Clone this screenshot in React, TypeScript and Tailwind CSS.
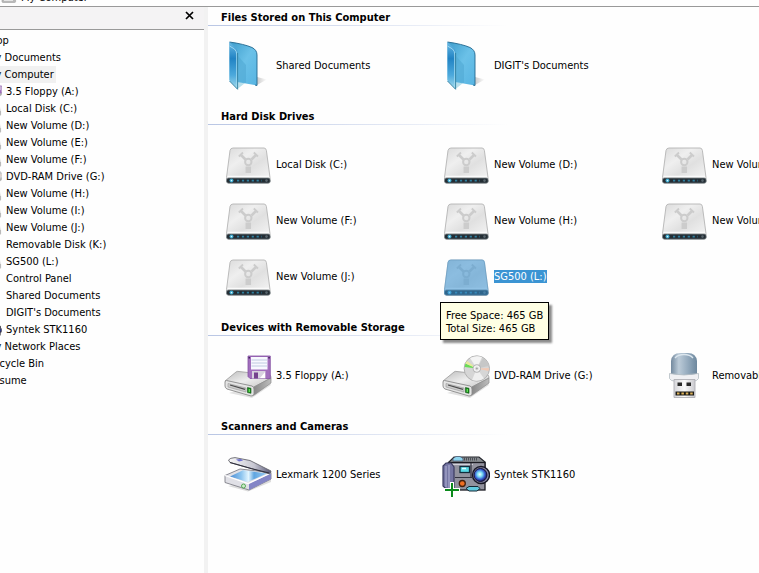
import type { ReactNode } from "react";

type IconProps = { size: string; selected?: boolean };

function HardDisk({ size, selected }: IconProps) {
  return (
    <svg viewBox="0 0 48 48" className={`${size} shrink-0`} aria-hidden="true">
      <defs>
        <linearGradient id="hdTop" x1="0" y1="0" x2="1" y2="1">
          <stop offset="0" stopColor="#dadada" />
          <stop offset="0.35" stopColor="#efefef" />
          <stop offset="0.6" stopColor="#e0e0e0" />
          <stop offset="1" stopColor="#f4f4f4" />
        </linearGradient>
      </defs>
      <path d="M9 8H40Q42 8 42.400 10.500L46 37.500V39H2.500V37.500L6 10.500Q6.500 8 9 8Z" fill="url(#hdTop)" stroke="#b4b4b4" strokeWidth="0.900" />
      <path d="M3.500 36.500H45" stroke="#fbfbfb" strokeWidth="1.500" />
      <g fill="none" stroke="#cccccc">
        <circle cx="24.300" cy="22" r="3.200" strokeWidth="2" />
        <path d="M21.500 19.500L17 15M27.500 19.500L32 15" strokeWidth="2.600" />
        <path d="M14.800 16.500L19 12.500M34 16.500L29.800 12.500" strokeWidth="1.800" />
        <path d="M24.300 26.500V33" strokeWidth="5.500" />
      </g>
      <rect x="2.500" y="38" width="43.700" height="5.200" rx="2" fill="#232d34" stroke="#7f8689" strokeWidth="0.800" />
      <circle cx="7.500" cy="40.600" r="2" fill="#39a5c9" />
      <circle cx="7.500" cy="40.600" r="0.800" fill="#d8f8ff" />
      <path d="M13 40.600H38" stroke="#2f7f9e" strokeWidth="1.600" strokeDasharray="2.200 2.700" />
      <circle cx="42.500" cy="40.600" r="1.300" fill="#58656c" />
      {selected && (
        <path
          d="M9 7.500H40Q42.500 7.500 43 10.500L46.500 38V41Q46.500 43.500 44 43.500H5Q2 43.500 2 41V38L5.500 10.500Q6 7.500 9 7.500Z"
          fill="#3b94d3"
          opacity="0.550"
        />
      )}
    </svg>
  );
}

function SmallDisk({ size }: IconProps) {
  return (
    <svg viewBox="0 0 16 16" className={`${size} shrink-0`} aria-hidden="true">
      <path d="M3 2H12.500L14.600 10.500H1Z" fill="#ececec" stroke="#cfcfcf" strokeWidth="0.600" />
      <path d="M1 10.500H14.600V13.500Q14.600 14.500 13.500 14.500H2Q1 14.500 1 13.500Z" fill="#b9b9b9" stroke="#a0a0a0" strokeWidth="0.600" />
      <path d="M3 12.500H12" stroke="#e6e6e6" strokeWidth="1" />
    </svg>
  );
}

function Folder({ size }: IconProps) {
  return (
    <svg viewBox="0 0 48 48" className={`${size} shrink-0 overflow-visible`} aria-hidden="true">
      <defs>
        <linearGradient id="foBack" x1="0" y1="0" x2="1" y2="1">
          <stop offset="0" stopColor="#3d9ccb" />
          <stop offset="0.500" stopColor="#6bc1e8" />
          <stop offset="1" stopColor="#57b4e2" />
        </linearGradient>
        <linearGradient id="foFlap" x1="0" y1="0" x2="0" y2="1">
          <stop offset="0" stopColor="#69b9e4" />
          <stop offset="0.350" stopColor="#2183c4" />
          <stop offset="0.700" stopColor="#4ca9dc" />
          <stop offset="1" stopColor="#a5dbec" />
        </linearGradient>
        <linearGradient id="foShade" x1="0" y1="0" x2="1" y2="0">
          <stop offset="0" stopColor="#c6c6c6" />
          <stop offset="1" stopColor="#ffffff" />
        </linearGradient>
      </defs>
      <path d="M32 44.500L33 36L43 38.500Z" fill="url(#foShade)" />
      <path d="M13.500 48L21 42L8 40Z" fill="#b8dfeb" />
      <path d="M5.500 1Q20 3 28 6.500Q33 9 33 14V44.500L13 41L5.500 39Z" fill="url(#foBack)" />
      <path d="M14 15L22 24V42L14 41Z" fill="#50a9d3" opacity="0.600" />
      <path d="M5.500 1Q20 3 28 6.500Q33 9 33 14V44.500L31 44" fill="none" stroke="#23688e" strokeWidth="0.900" />
      <path d="M5.500 1L11.500 6.500Q13.500 8.500 13.500 12V48.300L5.500 40Z" fill="url(#foFlap)" />
      <path d="M5.500 5L10.500 8Q12.700 10 12.700 13V46" fill="none" stroke="#a3dcf2" strokeWidth="0.900" />
      <path d="M13.600 12V48.300L5.500 40" fill="none" stroke="#337f9f" strokeWidth="0.900" />
    </svg>
  );
}

function DriveBase() {
  return (
    <>
      <defs>
        <linearGradient id="drTop" x1="0" y1="0" x2="1" y2="1">
          <stop offset="0" stopColor="#bcbcbc" />
          <stop offset="0.500" stopColor="#ededed" />
          <stop offset="1" stopColor="#c4c4c4" />
        </linearGradient>
        <linearGradient id="drSide" x1="0" y1="0" x2="1" y2="0">
          <stop offset="0" stopColor="#858585" />
          <stop offset="1" stopColor="#bdbdbd" />
        </linearGradient>
      </defs>
      <path d="M5 42L28 47L47 34L44 30Z" fill="#e2e2e2" />
      <path d="M1 30L12 21Q13 20 15 20.500L46 24Q47 25 47 27L29 36.500Z" fill="url(#drTop)" stroke="#9b9b9b" strokeWidth="0.800" />
      <path d="M29 36.500L47 27V32L29.500 44.500Z" fill="url(#drSide)" stroke="#8c8c8c" strokeWidth="0.700" />
      <path d="M2.500 29.500L28 35Q30 36 30 38V43Q29.500 45.300 27 45L3 38Q1 37 1 35V31Q1 29.500 2.500 29.500Z" fill="#e4e4e4" stroke="#8a8a8a" strokeWidth="0.900" />
      <path d="M4 32.500L22 37V41L4 36Z" fill="#cdcdcd" stroke="#a0a0a0" strokeWidth="0.700" />
      <path d="M6 34L21 38.300" stroke="#4c4c4c" strokeWidth="1.300" />
      <path d="M23.500 36.500L27 37.300V42.300L23.500 41.500Z" fill="#178a1d" stroke="#0d500f" strokeWidth="0.600" />
      <path d="M25.300 38V41" stroke="#6ae55b" strokeWidth="1.200" />
    </>
  );
}

function Floppy({ size }: IconProps) {
  return (
    <svg viewBox="0 0 48 48" className={`${size} shrink-0`} aria-hidden="true">
      <DriveBase />
      <path d="M24 5H46.300V27.500H26L24 25.500Z" fill="#a26fbd" stroke="#8450a2" strokeWidth="0.800" />
      <rect x="27" y="6" width="16.500" height="12.500" fill="#f8f8ff" />
      <path d="M27.500 9H43M27.500 12H43M27.500 15H43" stroke="#b9c5dd" strokeWidth="0.900" />
      <rect x="24.500" y="6" width="1.500" height="1.500" fill="#41205a" />
      <rect x="44.300" y="6" width="1.500" height="1.500" fill="#41205a" />
      <rect x="28" y="20" width="13.500" height="7.500" fill="#d8d2df" />
      <rect x="30" y="21.500" width="4" height="6" fill="#75418e" />
      <path d="M36 27L41 21V27Z" fill="#ffffff" />
    </svg>
  );
}

function DvdDrive({ size }: IconProps) {
  return (
    <svg viewBox="0 0 48 48" className={`${size} shrink-0`} aria-hidden="true">
      <DriveBase />
      <circle cx="34.800" cy="17.500" r="12.700" fill="#d6d6d6" stroke="#adadad" strokeWidth="0.900" />
      <path d="M34.800 17.500L28 7Q34 4 40 6Z" fill="#f4f4f4" />
      <path d="M34.800 17.500L30 29Q36 31 42 27.500Z" fill="#efefef" />
      <path d="M34.800 17.500L41 7Q46 10 47 15Z" fill="#c6c7c7" />
      <path d="M34.800 17.500L22.700 16L23.500 12.500Z" fill="#68dd55" />
      <path d="M34.800 17.500L23.500 12.500L25 10Z" fill="#e9eb9a" />
      <path d="M34.800 17.500L46.500 20L47 17Z" fill="#f0c9b5" />
      <circle cx="34.800" cy="17.500" r="4.200" fill="#b5b5b5" />
      <circle cx="34.800" cy="17.500" r="2.800" fill="#e4e4e4" stroke="#ffffff" strokeWidth="0.900" />
      <circle cx="34.800" cy="17.500" r="1.100" fill="#a5a5a5" />
    </svg>
  );
}

function UsbStick({ size }: IconProps) {
  return (
    <svg viewBox="0 0 48 48" className={`${size} shrink-0`} aria-hidden="true">
      <defs>
        <linearGradient id="usBody" x1="0" y1="0" x2="1" y2="0">
          <stop offset="0" stopColor="#73899e" />
          <stop offset="0.300" stopColor="#bccbd8" />
          <stop offset="0.650" stopColor="#94aabd" />
          <stop offset="1" stopColor="#6d879d" />
        </linearGradient>
        <linearGradient id="usPlug" x1="0" y1="0" x2="1" y2="0">
          <stop offset="0" stopColor="#d6d6da" />
          <stop offset="0.500" stopColor="#fafafa" />
          <stop offset="1" stopColor="#c9c9ce" />
        </linearGradient>
      </defs>
      <path d="M11 25V10Q12 2 20 2H28Q36 2 37 10V25Z" fill="url(#usBody)" />
      <path d="M15 7Q18 3.500 24 3.500T33 7" fill="none" stroke="#dbe6ee" strokeWidth="1.300" />
      <path d="M9.500 22.500Q24 25.500 38.500 22.500V27.500Q37 30 34 30H14Q11 30 9.500 27.500Z" fill="#f0f0f3" stroke="#b4bcc3" strokeWidth="0.800" />
      <path d="M14 28.500H35V46.500H14Z" fill="url(#usPlug)" stroke="#b0b0b6" strokeWidth="0.900" />
      <rect x="17.500" y="31.500" width="4.500" height="3.500" fill="#292929" />
      <rect x="26.500" y="31.500" width="4.500" height="3.500" fill="#292929" />
      <rect x="15.500" y="40.500" width="18.500" height="4" fill="#1b1a16" />
      <path d="M17 42.500H33" stroke="#dcb25a" strokeWidth="2" strokeDasharray="2.500 1.900" />
    </svg>
  );
}

function Scanner({ size }: IconProps) {
  return (
    <svg viewBox="0 0 48 48" className={`${size} shrink-0`} aria-hidden="true">
      <defs>
        <linearGradient id="scGlass" x1="0" y1="0" x2="1" y2="0">
          <stop offset="0" stopColor="#4d8ed4" />
          <stop offset="0.300" stopColor="#8cc4ef" />
          <stop offset="0.500" stopColor="#e2f5ff" />
          <stop offset="0.650" stopColor="#5fa5e0" />
          <stop offset="1" stopColor="#9bcdf3" />
        </linearGradient>
        <linearGradient id="scLid" x1="0" y1="0" x2="1" y2="0">
          <stop offset="0" stopColor="#f8f8f8" />
          <stop offset="0.600" stopColor="#c7c7d2" />
          <stop offset="1" stopColor="#555575" />
        </linearGradient>
      </defs>
      <path d="M4 36L24 41.500L47 32V28Z" fill="#dddddd" />
      <path d="M1 25.500L16 19L47 22.500V29L25 40L1 32.500Z" fill="#e0e0e6" stroke="#7f7f88" strokeWidth="0.900" />
      <path d="M25 34L47 23V29L25 40Z" fill="#8385c6" />
      <path d="M6 26.500L19 20.200L43 23.500L23.500 32Z" fill="url(#scGlass)" />
      <path d="M1 25.500L24 33.500L47 23" fill="none" stroke="#ffffff" strokeWidth="1.300" />
      <path d="M4.500 10Q6 7.800 11 7.600L26 10.500L47 21L46 24L27 18.500L6 12.500Z" fill="url(#scLid)" stroke="#66666e" strokeWidth="0.900" />
      <path d="M6 12.500L27 18.500L45 23" fill="none" stroke="#2f2f3d" strokeWidth="1.100" />
      <path d="M12 9.500L17 9L19 10.500L15 11.500Z" fill="#6d70cf" />
      <circle cx="19.500" cy="36" r="2" fill="#cdeccb" stroke="#4aa54a" strokeWidth="0.900" />
    </svg>
  );
}

function Camera({ size }: IconProps) {
  return (
    <svg viewBox="0 0 48 48" className={`${size} shrink-0`} aria-hidden="true">
      <defs>
        <radialGradient id="caLens" cx="0.450" cy="0.450" r="0.550">
          <stop offset="0" stopColor="#f4ffff" />
          <stop offset="0.350" stopColor="#79dcf5" />
          <stop offset="0.700" stopColor="#3559cf" />
          <stop offset="1" stopColor="#1b1450" />
        </radialGradient>
      </defs>
      <path d="M6 13L12 7H37L43 12V18H6Z" fill="#888c91" stroke="#25272d" strokeWidth="1.200" />
      <path d="M12 9H35" stroke="#4b4f55" strokeWidth="3" strokeDasharray="1 1" />
      <path d="M11 8.500L14 6.500H18L21 8.500V11H11Z" fill="#8ed4ee" stroke="#515f76" strokeWidth="0.800" />
      <rect x="7" y="12.500" width="36" height="27.500" fill="#92929e" stroke="#1b1b22" strokeWidth="1.300" />
      <path d="M9 14.500H31" stroke="#d2d2da" strokeWidth="1.200" />
      <path d="M13 27.500H30M29 13V28" stroke="#33333f" strokeWidth="1.200" />
      <path d="M1 16L4 13H9L12 17V39H4L1 36Z" fill="#7475a2" stroke="#3b3b61" strokeWidth="1.200" />
      <path d="M4 16V37M7 15V38" stroke="#a5a6cb" strokeWidth="1.300" />
      <rect x="18" y="16.500" width="9.500" height="6" fill="#5adce8" stroke="#122d3c" strokeWidth="1.300" />
      <path d="M20 18.500H24" stroke="#dfffff" strokeWidth="1.500" />
      <circle cx="20.300" cy="33.500" r="3" fill="#ef6f23" stroke="#43200e" strokeWidth="1.300" />
      <circle cx="39" cy="25" r="8.500" fill="#8a8aa8" stroke="#181824" strokeWidth="1.400" />
      <circle cx="38.500" cy="25" r="6.500" fill="url(#caLens)" stroke="#16163b" strokeWidth="1" />
      <path d="M24 38.500L27 36.500H36L38 38.500L35 41H27Z" fill="#61c9df" stroke="#142934" strokeWidth="1" />
      <path d="M10 32V48M2 40H18" stroke="#ffffff" strokeWidth="4" />
      <path d="M10 33V47M3 40H17" stroke="#0b8a1b" strokeWidth="2" />
    </svg>
  );
}

function Blank({ size }: IconProps) {
  return <span className={`${size} shrink-0`} />;
}

type IconType = (props: IconProps) => ReactNode;
type TreeNode = { label: string; indent: string; icon: IconType; current?: boolean };

const ROOT = "pl-0";
const CHILD = "pl-[19px]";
const LEAF = "pl-[38px]";

const tree: TreeNode[] = [
  { label: "Desktop", indent: ROOT, icon: Blank },
  { label: "My Documents", indent: CHILD, icon: Blank },
  { label: "My Computer", indent: CHILD, icon: Blank, current: true },
  { label: "3.5 Floppy (A:)", indent: LEAF, icon: Floppy },
  { label: "Local Disk (C:)", indent: LEAF, icon: SmallDisk },
  { label: "New Volume (D:)", indent: LEAF, icon: SmallDisk },
  { label: "New Volume (E:)", indent: LEAF, icon: SmallDisk },
  { label: "New Volume (F:)", indent: LEAF, icon: SmallDisk },
  { label: "DVD-RAM Drive (G:)", indent: LEAF, icon: DvdDrive },
  { label: "New Volume (H:)", indent: LEAF, icon: SmallDisk },
  { label: "New Volume (I:)", indent: LEAF, icon: SmallDisk },
  { label: "New Volume (J:)", indent: LEAF, icon: SmallDisk },
  { label: "Removable Disk (K:)", indent: LEAF, icon: Blank },
  { label: "SG500 (L:)", indent: LEAF, icon: SmallDisk },
  { label: "Control Panel", indent: LEAF, icon: Blank },
  { label: "Shared Documents", indent: LEAF, icon: Blank },
  { label: "DIGIT's Documents", indent: LEAF, icon: Blank },
  { label: "Syntek STK1160", indent: LEAF, icon: Camera },
  { label: "My Network Places", indent: CHILD, icon: Blank },
  { label: "Recycle Bin", indent: CHILD, icon: Blank },
  { label: "Resume", indent: CHILD, icon: Blank },
];

type Item = { label: string; icon: IconType; details?: string[] };

const groups: { title: string; items: Item[] }[] = [
  {
    title: "Files Stored on This Computer",
    items: [
      { label: "Shared Documents", icon: Folder },
      { label: "DIGIT's Documents", icon: Folder },
    ],
  },
  {
    title: "Hard Disk Drives",
    items: [
      { label: "Local Disk (C:)", icon: HardDisk },
      { label: "New Volume (D:)", icon: HardDisk },
      { label: "New Volume (E:)", icon: HardDisk },
      { label: "New Volume (F:)", icon: HardDisk },
      { label: "New Volume (H:)", icon: HardDisk },
      { label: "New Volume (I:)", icon: HardDisk },
      { label: "New Volume (J:)", icon: HardDisk },
      { label: "SG500 (L:)", icon: HardDisk, details: ["Free Space: 465 GB", "Total Size: 465 GB"] },
    ],
  },
  {
    title: "Devices with Removable Storage",
    items: [
      { label: "3.5 Floppy (A:)", icon: Floppy },
      { label: "DVD-RAM Drive (G:)", icon: DvdDrive },
      { label: "Removable Disk (K:)", icon: UsbStick },
    ],
  },
  {
    title: "Scanners and Cameras",
    items: [
      { label: "Lexmark 1200 Series", icon: Scanner },
      { label: "Syntek STK1160", icon: Camera },
    ],
  },
];

function DriveItem({ label, icon: Icon, details }: Item) {
  const selected = details !== undefined;
  return (
    <li className="relative h-14">
      <button type="button" className="flex h-full items-center gap-1">
        <Icon size="size-12" selected={selected} />
        <span className={selected ? "bg-[#3b94d3] text-white" : ""}>{label}</span>
      </button>
      {details && (
        <div
          role="tooltip"
          className="absolute top-[54px] -left-0.5 z-10 border border-black bg-[#ffffe4] px-[5px] pt-1.5 pb-1 shadow-[3px_3px_2px_rgba(0,0,0,0.45)]"
        >
          {details.map((line) => (
            <p key={line}>{line}</p>
          ))}
        </div>
      )}
    </li>
  );
}

export default function App() {
  return (
    <div className="flex h-screen flex-col overflow-hidden bg-[#fefefe] font-['Tahoma','DejaVu_Sans_Condensed',sans-serif] text-[11px] leading-[13px] whitespace-nowrap text-black">
      <header className="flex h-[7px] shrink-0 items-end gap-1 overflow-hidden border-b border-[#999] pb-0.5 pl-px">
        <SmallDisk size="size-4" />
        <h1>My Computer</h1>
      </header>
      <div className="flex min-h-0 flex-1">
        <aside className="flex w-[208px] shrink-0 flex-col overflow-hidden border-r-4 border-[#f2f2f2]">
          <div className="flex h-[23px] shrink-0 items-start justify-end border-b border-[#999] bg-[#f4f3f4] pt-0.5 pr-2">
            <button type="button" aria-label="Close" className="p-0.5">
              <svg viewBox="0 0 9 9" className="size-[9px]">
                <path d="M1 1L8 8M8 1L1 8" stroke="#000" strokeWidth="1.700" />
              </svg>
            </button>
          </div>
          <ul className="-ml-[52px] pt-0.5">
            {tree.map(({ label, indent, icon: Icon, current }) => (
              <li key={label} className={indent}>
                <button type="button" className="flex h-[17px] items-center gap-0.5">
                  <Icon size="size-4" />
                  <span className={current ? "bg-[#f1f1f1] px-0.5 py-0.5" : "px-0.5"}>{label}</span>
                </button>
              </li>
            ))}
          </ul>
        </aside>
        <main className="flex min-w-0 flex-1 flex-col gap-[13px] overflow-hidden">
          {groups.map(({ title, items }) => (
            <section key={title}>
              <h2 className="h-[18px] pt-1 pl-[13px] font-bold">{title}</h2>
              <div className="h-px w-[300px] bg-linear-to-r from-[#b9c6e4] to-[#fefefe]" />
              <ul className="grid grid-cols-[repeat(3,218px)] pt-[11px] pl-4">
                {items.map((item) => (
                  <DriveItem key={item.label} {...item} />
                ))}
              </ul>
            </section>
          ))}
        </main>
      </div>
    </div>
  );
}
